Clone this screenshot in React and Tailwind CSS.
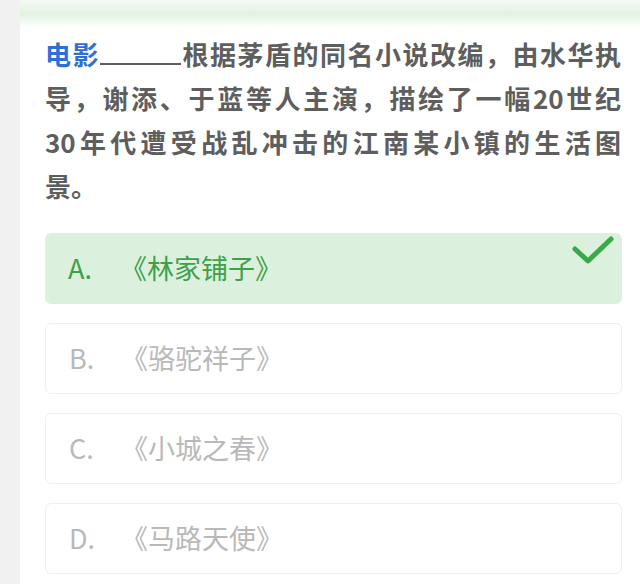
import React from 'react';

const cjk = { fontFamily: '"Noto Sans CJK SC", "Noto Sans", sans-serif' };

const options = [
  { key: 'A', label: '《林家铺子》', correct: true },
  { key: 'B', label: '《骆驼祥子》' },
  { key: 'C', label: '《小城之春》' },
  { key: 'D', label: '《马路天使》' },
];

function Option({ opt }) {
  if (opt.correct) {
    return (
      <div className="relative flex items-center h-[71px] pl-[23px] rounded-md bg-[#dcf1dd] text-[#3ea04b] text-[27px]">
        <span className="inline-block w-[52px]">{opt.key}.</span>
        <span>{opt.label}</span>
        <svg
          className="absolute right-[7px] top-[1px]"
          width="44"
          height="32"
          viewBox="0 0 44 32"
          fill="none"
        >
          <path
            d="M4 15 L17 27 L40 5"
            stroke="#39a94a"
            strokeWidth="5"
            strokeLinecap="round"
            strokeLinejoin="round"
          />
        </svg>
      </div>
    );
  }
  return (
    <div className="flex items-center h-[71px] pl-[23px] rounded-md border border-[#efefef] bg-white text-[#b9b9b9] text-[27px]">
      <span className="inline-block w-[52px]">{opt.key}.</span>
      <span>{opt.label}</span>
    </div>
  );
}

export default function App() {
  return (
    <div className="flex w-[640px] h-[584px] overflow-hidden bg-white" style={cjk}>
      <div className="w-[20px] shrink-0 bg-[#f1f1f1]" />
      <div className="flex-1 flex flex-col bg-white">
        <div className="h-[28px] shrink-0 bg-gradient-to-b from-[#f4faf4] via-[#e2f2e2] to-white" />

        <div className="-mt-[1px] pl-[25px] pr-[19px] text-[26px] font-bold leading-[44px] text-[#5e5e5e]">
          <div className="text-justify [text-align-last:justify]">
            <span className="text-[#2f6fd3]">电影</span>
            <span className="inline-block w-[81px] h-[38px] border-b-2 border-[#5e5e5e] align-baseline" />
            根据茅盾的同名小说改编，由水华执
          </div>
          <div className="text-justify [text-align-last:justify]">
            导，谢添、于蓝等人主演，描绘了一幅20世纪
          </div>
          <div className="text-justify [text-align-last:justify]">
            30年代遭受战乱冲击的江南某小镇的生活图
          </div>
          <div>景。</div>
        </div>

        <div className="mt-[25px] pl-[25px] pr-[18px] flex flex-col gap-[19px]">
          {options.map((opt) => (
            <Option key={opt.key} opt={opt} />
          ))}
        </div>
      </div>
    </div>
  );
}
